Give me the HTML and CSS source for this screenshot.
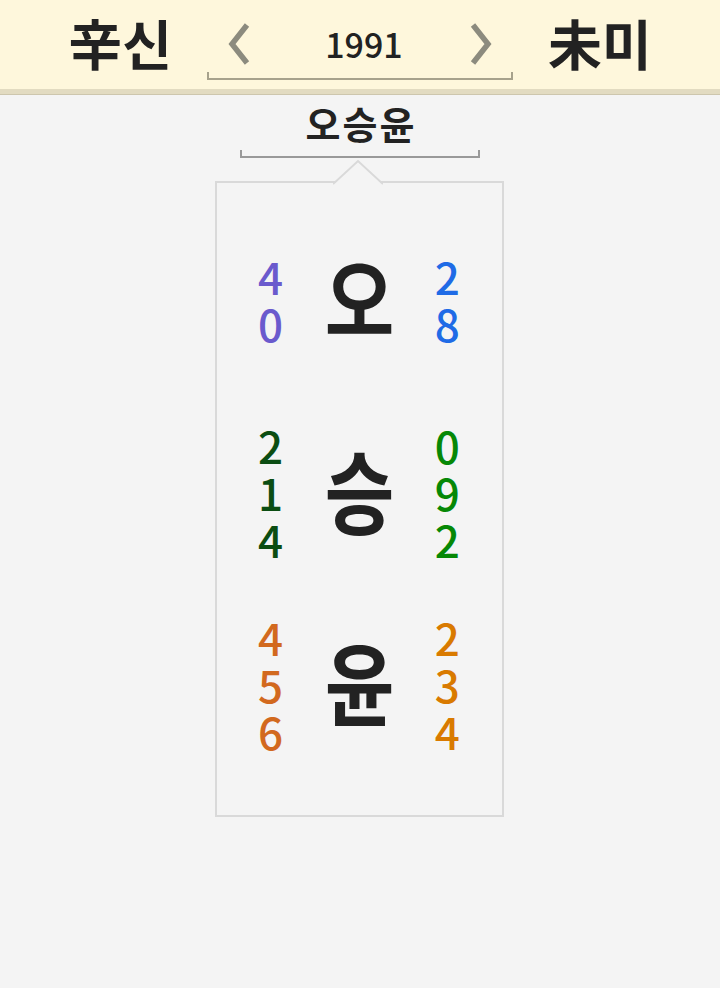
FILE: index.html
```html
<!DOCTYPE html>
<html lang="ko">
<head>
<meta charset="utf-8">
<link rel="stylesheet" href="styles.css">
</head>
<body>
<header class="topbar">
  <div class="gan">辛신</div>
  <div class="nav">
    <div class="nav-row">
      <svg class="chev" width="24" height="42" viewBox="0 0 24 42"><polyline points="20,2 5,21 20,40" fill="none" stroke="#8c8b7e" stroke-width="5.5"/></svg>
      <div class="year">1991</div>
      <svg class="chev" width="24" height="42" viewBox="0 0 24 42"><polyline points="4,2 19,21 4,40" fill="none" stroke="#8c8b7e" stroke-width="5.5"/></svg>
    </div>
    <div class="nav-bracket"></div>
  </div>
  <div class="gan">未미</div>
</header>
<main class="content">
  <div class="name">오승윤</div>
  <div class="name-bracket"></div>
  <section class="card">
    <svg class="notch" width="50" height="26" viewBox="0 0 50 26"><polygon points="0,26 25,2 50,26" fill="#f4f4f4"/><polyline points="0,25 25,2 50,25" fill="none" stroke="#d9d9d9" stroke-width="2"/></svg>
    <div class="row">
      <div class="nums c-purple"><span>4</span><span>0</span></div>
      <div class="han">오</div>
      <div class="nums c-blue"><span>2</span><span>8</span></div>
    </div>
    <div class="row">
      <div class="nums c-dgreen"><span>2</span><span>1</span><span>4</span></div>
      <div class="han">승</div>
      <div class="nums c-green"><span>0</span><span>9</span><span>2</span></div>
    </div>
    <div class="row">
      <div class="nums c-orange"><span>4</span><span>5</span><span>6</span></div>
      <div class="han">윤</div>
      <div class="nums c-orange2"><span>2</span><span>3</span><span>4</span></div>
    </div>
  </section>
</main>
</body>
</html>
```
FILE: styles.css
```css
html, body {
  margin: 0;
  padding: 0;
}
body {
  background: #f4f4f4;
  font-family: "Noto Sans CJK KR", "Noto Sans", sans-serif;
  color: #222;
  width: 720px;
  height: 988px;
  overflow: hidden;
}
.topbar {
  height: 89px;
  background: #fef7dc;
  border-bottom: 5px solid #e2dbc1;
  box-shadow: 0 1px 0 #cdc6ad;
  display: flex;
  justify-content: center;
  align-items: center;
  gap: 35px;
}
.gan {
  font-size: 54px;
  font-weight: 700;
  line-height: 1;
  color: #222;
  margin-top: -4px;
}
.nav {
  width: 306px;
  display: flex;
  flex-direction: column;
  margin-top: 10px;
}
.nav-row {
  display: flex;
  align-items: center;
  justify-content: space-between;
  padding: 0 20px;
  height: 48px;
}
.year {
  font-size: 34px;
  font-weight: 500;
  line-height: 1;
  color: #222;
  margin-left: 8px;
}
.nav-bracket {
  height: 6px;
  border: 2px solid #a7a28c;
  border-top: none;
  margin-top: 4px;
}
.content {
  display: flex;
  flex-direction: column;
  align-items: center;
}
.name {
  font-size: 38px;
  font-weight: 700;
  line-height: 1;
  margin-top: 10px;
  letter-spacing: 2px;
  margin-left: 2px;
}
.name-bracket {
  width: 236px;
  height: 6px;
  border: 2px solid #999;
  border-top: none;
  margin-top: 8px;
}
.card {
  position: relative;
  box-sizing: border-box;
  width: 289px;
  height: 636px;
  margin-top: 23px;
  margin-left: -2px;
  border: 2px solid #d9d9d9;
  padding: 21px 10px 0 10px;
}
.notch {
  position: absolute;
  top: -24px;
  left: 116px;
}
.row {
  height: 192px;
  display: grid;
  grid-template-columns: 1fr 1fr 1fr;
  align-items: center;
  justify-items: center;
}
.nums {
  display: flex;
  flex-direction: column;
  align-items: center;
  font-size: 44px;
  font-weight: 500;
  line-height: 47px;
}
.nums span {
  display: block;
  height: 47px;
}
.han {
  font-size: 90px;
  font-weight: 700;
  line-height: 1;
  color: #222;
  transform: scaleX(0.84);
  margin-bottom: 8px;
}
.c-purple { color: #6a5acd; }
.c-blue { color: #1f6be6; }
.c-dgreen { color: #0b4d12; }
.c-green { color: #068806; }
.c-orange { color: #d2691e; }
.c-orange2 { color: #d97a00; }
```
